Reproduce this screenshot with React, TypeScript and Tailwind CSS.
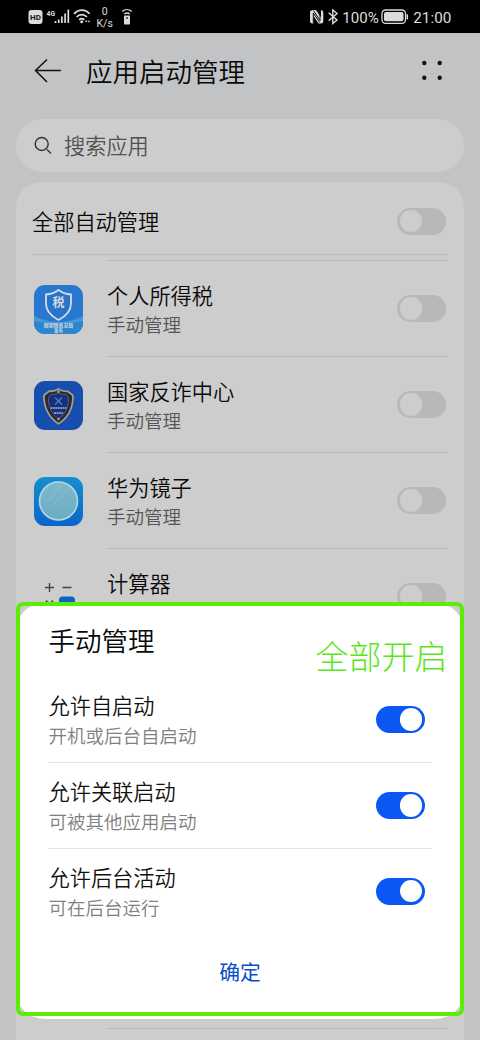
import clsx from "clsx";
import type { ReactNode } from "react";

function Toggle({ on = false }: { on?: boolean }) {
  return (
    <span
      className={clsx(
        "flex h-[27px] w-[49px] flex-shrink-0 items-center rounded-full px-[2.5px]",
        on ? "justify-end bg-[#0b57f4]" : "justify-start bg-[#b8b8b8]"
      )}
    >
      <span className={clsx("size-[22.5px] rounded-full", on ? "bg-white" : "bg-[#cdcdcd]")} />
    </span>
  );
}

function StatusBar() {
  return (
    <div className="flex h-[33px] items-center justify-between bg-black font-[Roboto,sans-serif] text-[#dcdcdc]">
      <svg width="150" height="33" viewBox="0 0 150 33" fill="none" stroke="#dcdcdc">
        <rect x="28.5" y="10" width="14" height="14" rx="3" fill="#dcdcdc" stroke="none" />
        <text x="35.5" y="20" fontSize="8" fontWeight="700" textAnchor="middle" fill="#111" stroke="none">
          HD
        </text>
        <text x="46.5" y="15.7" fontSize="7.5" fontWeight="700" textLength="8.5" lengthAdjust="spacingAndGlyphs" fill="#dcdcdc" stroke="none">
          4G
        </text>
        <path d="M55.5 21v2M58.7 19.5v3.5M61.9 16.5v6.5M65.1 13.5v9.5M68.3 9.5v13.5" strokeWidth="1.7" />
        <path d="M74 13.8c4.5-5 11.5-5 15.5 0M76.6 17c3-3.2 7.3-3.2 10.3 0M79.2 19.8c1.5-1.6 3.6-1.6 5.1 0" strokeWidth="1.8" />
        <circle cx="81.7" cy="21.8" r="1.5" fill="#dcdcdc" stroke="none" />
        <path d="M85 22l1.2-2 1.2 2zM87.7 20.8h2.4l-1.2 2z" fill="#dcdcdc" stroke="none" />
        <text x="104.7" y="15" fontSize="10.5" fontWeight="400" textAnchor="middle" fill="#dcdcdc" stroke="none">
          0
        </text>
        <text x="104.7" y="26.7" fontSize="10.5" fontWeight="400" textAnchor="middle" fill="#dcdcdc" stroke="none">
          K/s
        </text>
        <path d="M122.3 11.5c2.8-2.5 6.6-2.5 9.4 0M124.3 14c1.7-1.3 3.7-1.3 5.4 0" strokeWidth="1.3" />
        <rect x="124" y="15.5" width="6" height="9" rx="0.8" fill="#dcdcdc" stroke="none" />
        <path d="M126.2 18h1.6" stroke="#111" strokeWidth="1.5" />
      </svg>
      <svg width="175" height="33" viewBox="305 0 175 33" fill="none" stroke="#dcdcdc">
        <path d="M313 10h3l5 7.5V10q2.3 0 2.3 2.5v8.5q0 2.5-2.3 2.5h-2.5L313.5 16v7.5h-1q-2.5 0-2.5-2.5v-8.500q0-2.500 3-2.500z" fill="#dcdcdc" stroke="none" />
        <path d="M313.3 23.5v-10.5l6.5 9.5M320 10v10.5l-6.5-10" stroke="#111" strokeWidth="1" />
        <path d="M328.7 12.7l8.3 7.3-4.2 3.5v-13.5l4.2 3.5-8.3 7.2" strokeWidth="1.4" />
        <text x="342.3" y="22.5" fontSize="15" fontWeight="400" textLength="36.5" lengthAdjust="spacingAndGlyphs" fill="#dcdcdc" stroke="none">
          100%
        </text>
        <rect x="382" y="10" width="23.5" height="13.3" rx="3.5" strokeWidth="1.3" />
        <rect x="384" y="12" width="19.5" height="9.3" rx="1.8" fill="#dcdcdc" stroke="none" />
        <path d="M407.3 14.3v5" strokeWidth="1.5" />
        <text x="413.3" y="22.5" fontSize="15.3" fontWeight="400" textLength="38" lengthAdjust="spacingAndGlyphs" fill="#dcdcdc" stroke="none">
          21:00
        </text>
      </svg>
    </div>
  );
}

function Header() {
  return (
    <header className="flex h-[86px] items-center justify-between pr-[37px] pb-[10px] pl-[34px]">
      <div className="flex items-center gap-6">
        <svg width="28" height="26" viewBox="0 0 28 26" fill="none" stroke="#111" strokeWidth="1.5">
          <path d="M26.8 12.5H1.2M13 1.5L1.5 12.5l11.5 11.5" />
        </svg>
        <h1 className="text-[26.5px] leading-[36px] text-[#090909]">应用启动管理</h1>
      </div>
      <svg width="22" height="22" viewBox="0 0 22 22" fill="#111">
        <circle cx="3.3" cy="3" r="2.2" />
        <circle cx="18.7" cy="3" r="2.2" />
        <circle cx="3.3" cy="17.7" r="2.2" />
        <circle cx="18.7" cy="17.7" r="2.2" />
      </svg>
    </header>
  );
}

function TaxIcon() {
  return (
    <svg width="49" height="49" viewBox="0 0 49 49">
      <defs>
        <clipPath id="taxClip">
          <rect width="49" height="49" rx="11" />
        </clipPath>
      </defs>
      <g clipPath="url(#taxClip)">
        <rect width="49" height="49" fill="#2877d0" />
        <path d="M0 31q24.5 12 49 0v18H0z" fill="#429bd2" />
        <path d="M0 36q24.5 6 49 0v13H0z" fill="#2e85ce" />
      </g>
      <path
        d="M24.5 5q5 4 12.5 4.5v9q0 10-12.5 16.500Q12 28.500 12 18.500v-9Q19.500 9 24.500 5z"
        fill="#2874cb"
        stroke="#d3dce4"
        strokeWidth="1.8"
      />
      <text x="24.5" y="22" fontSize="12" fontWeight="700" textAnchor="middle" fill="#d3dce4">税</text>
      <text x="24.5" y="41.5" fontSize="4.9" fontWeight="700" textAnchor="middle" fill="#d3dce4">国家税务总局</text>
      <text x="24.5" y="46.5" fontSize="4.4" fontWeight="700" textAnchor="middle" fill="#d3dce4">发布</text>
    </svg>
  );
}

function AntiFraudIcon() {
  return (
    <svg width="49" height="49" viewBox="0 0 49 49">
      <rect width="49" height="49" rx="11" fill="#164eaf" />
      <path
        d="M24.5 8q5 3 9 2.200l4 3q2 1 1.500 4-1 17-14.500 25.500Q11 34 10 17q-.5-3 1.500-4l4-3q4 1 9-2z"
        fill="#262a32"
        stroke="#a69b88"
        strokeWidth="1.8"
      />
      <path
        d="M24.5 12q5 2.500 8 1.500 3 3 2 8-2 11-10 16.500-8-5.500-10-16.500-1-5 2-8 3 1 8-1.500z"
        fill="#17307c"
        stroke="#68737f"
        strokeWidth="0.7"
      />
      <path d="M21 16.5l7 7M28 16.5l-7 7" stroke="#4c82cf" strokeWidth="1.3" />
      <path d="M16.5 27h16M20 32h9" stroke="#9fb0d0" strokeWidth="1.5" strokeDasharray="2 .4" />
      <circle cx="24.5" cy="10.7" r="1.2" fill="#aeb3bb" />
      <circle cx="24.5" cy="38" r="1.2" fill="#aeb3bb" />
    </svg>
  );
}

function MirrorIcon() {
  return (
    <svg width="49" height="49" viewBox="0 0 49 49">
      <defs>
        <linearGradient id="mirror" x2="0" y2="1">
          <stop stopColor="#148fce" />
          <stop offset="1" stopColor="#0a65cc" />
        </linearGradient>
        <linearGradient id="glass" x2="0" y2="1">
          <stop stopColor="#80b8ca" />
          <stop offset="1" stopColor="#69adc5" />
        </linearGradient>
      </defs>
      <rect width="49" height="49" rx="11" fill="url(#mirror)" />
      <circle cx="24.5" cy="24" r="19" fill="url(#glass)" stroke="#b9d5e1" strokeWidth="1.6" />
      <path d="M14 24L28 8M18 29L35 12" stroke="#93c2ce" strokeWidth="2" opacity="0.3" />
    </svg>
  );
}

function CalculatorIcon() {
  return (
    <svg width="49" height="49" viewBox="0 0 49 49">
      <path d="M11 14.5h9M15.5 10v9M28.5 14.5h9" stroke="#444" strokeWidth="1.4" />
      <path d="M12 27.5l7 7M19 27.5l-7 7" stroke="#444" strokeWidth="1.4" />
      <rect x="25" y="23.5" width="16" height="20" rx="3.5" fill="#0e5fc8" />
    </svg>
  );
}

function AppRow({ icon, name, status }: { icon?: ReactNode; name?: string; status?: string }) {
  return (
    <div className="flex h-[96px] items-center gap-[23px] pl-[18px]">
      <div className="size-[49px] flex-shrink-0">{icon}</div>
      <div className="flex h-full flex-1 items-center justify-between border-b border-[#bcbcbc] pr-[2px]">
        <div className="pt-[2px] pl-[1px]">
          <p className="h-[30px] text-[21.2px] leading-[30px] text-[#090909]">{name}</p>
          <p className="h-[29px] text-[18.5px] leading-[29px] text-[#555]">{status}</p>
        </div>
        {name && <Toggle />}
      </div>
    </div>
  );
}

const permissions = [
  { title: "允许自启动", desc: "开机或后台自启动" },
  { title: "允许关联启动", desc: "可被其他应用启动" },
  { title: "允许后台活动", desc: "可在后台运行" },
];

function ManualDialog() {
  return (
    <section className="absolute top-[603px] left-[16px] h-[416px] w-[448px] rounded-[28px] bg-white px-8 pt-[19px]">
      <h2 className="h-[55px] pl-[0.5px] text-[26.5px] leading-[36px] text-[#090909]">手动管理</h2>
      {permissions.map((item, i) => (
        <div
          key={item.title}
          className={clsx(
            "flex items-center justify-between pr-[7.5px]",
            i < permissions.length - 1 ? "h-[86px] border-b border-[#e4e4e4]" : "h-[84px]"
          )}
        >
          <div className="pt-[1px] pl-[0.5px]">
            <p className="text-[21.2px] leading-[30px] text-[#111]">{item.title}</p>
            <p className="text-[18.5px] leading-[30px] text-[#808080]">{item.desc}</p>
          </div>
          <Toggle on />
        </div>
      ))}
      <button className="mt-[23px] block w-full text-center text-[20.8px] leading-[30px] font-normal text-[#0b4dcc]">
        确定
      </button>
    </section>
  );
}

export default function App() {
  return (
    <main className="relative h-[1040px] w-[480px] overflow-hidden bg-[#c2c3c5] font-['Noto_Sans_CJK_SC',sans-serif] font-[350]">
      <StatusBar />
      <Header />

      <div className="mx-4 flex h-[53px] items-center gap-[11px] rounded-full bg-[#cdcdcd] pl-[18px]">
        <svg width="19" height="19" viewBox="0 0 19 19" fill="none" stroke="#333" strokeWidth="1.4">
          <circle cx="7.7" cy="8" r="6.5" />
          <path d="M13 13.5l4 4" />
        </svg>
        <span className="pb-[1px] text-[21.2px] leading-[30px] text-[#515151]">搜索应用</span>
      </div>

      <div className="mx-4 mt-[10px] h-[900px] rounded-t-[25px] bg-[#cdcdcd] px-4">
        <div className="flex h-[73px] items-center justify-between border-b border-[#bcbcbc] pt-[6px] pr-[2px]">
          <span className="text-[21.2px] leading-[30px] text-[#090909]">全部自动管理</span>
          <Toggle />
        </div>
        <div className="mt-[5px] ml-[74px] border-t border-[#bcbcbc]" />
        <div className="-ml-4">
          <AppRow icon={<TaxIcon />} name="个人所得税" status="手动管理" />
          <AppRow icon={<AntiFraudIcon />} name="国家反诈中心" status="手动管理" />
          <AppRow icon={<MirrorIcon />} name="华为镜子" status="手动管理" />
          <AppRow icon={<CalculatorIcon />} name="计算器" />
          <AppRow />
          <AppRow />
          <AppRow />
          <AppRow />
        </div>
      </div>

      <ManualDialog />

      <div className="absolute top-[602px] left-[16px] h-[414px] w-[448px] rounded-[7px] border-4 border-[#5bed08]">
        <p className="absolute top-[27px] right-[12.5px] text-[33px] leading-[44px] font-light text-[#5be51b]">
          全部开启
        </p>
      </div>
    </main>
  );
}
